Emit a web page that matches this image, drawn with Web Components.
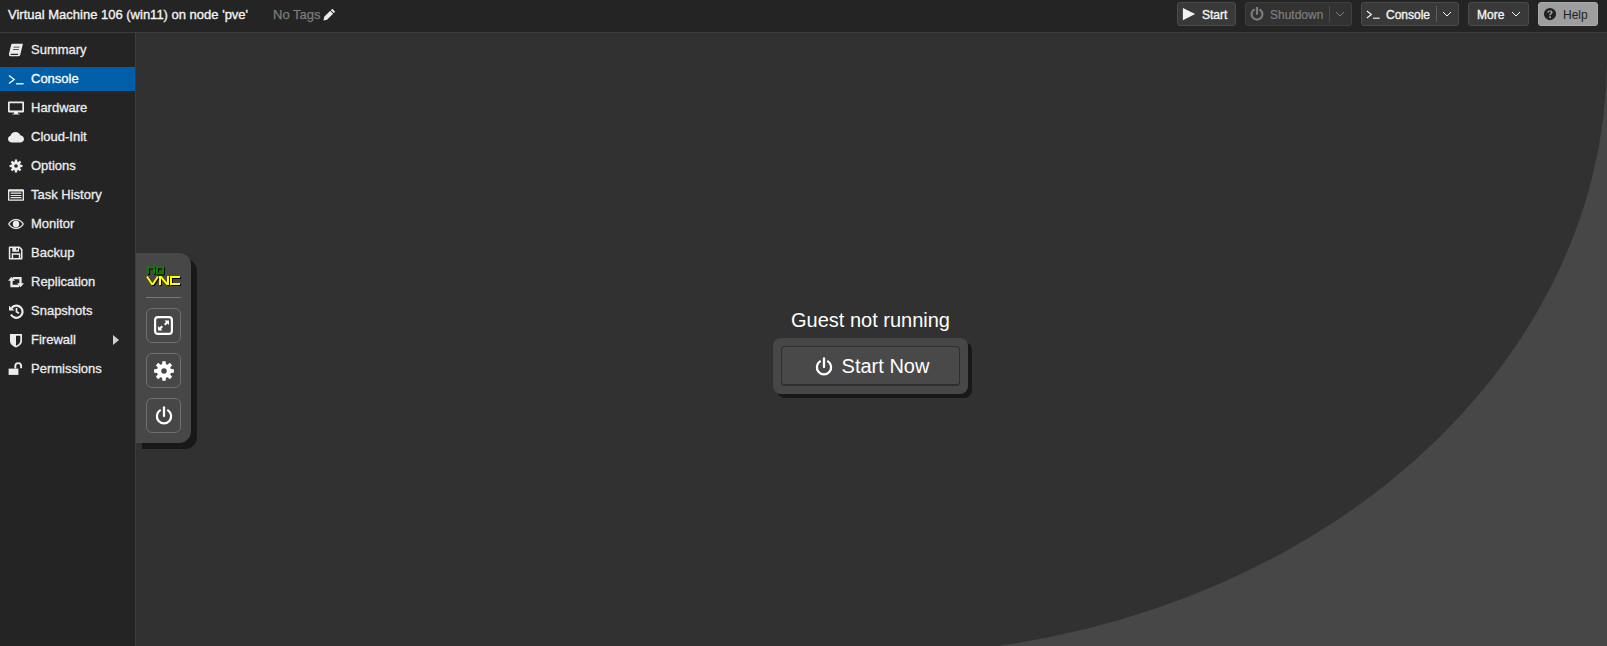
<!DOCTYPE html>
<html><head><meta charset="utf-8"><style>
html,body{margin:0;height:100%;background:#313131;overflow:hidden;font-family:"Liberation Sans",Arial,sans-serif}
body{display:flex;flex-direction:column;height:646px}
</style></head><body>
<pve-toolbar></pve-toolbar>
<div style="display:flex;flex:1;min-height:0">
<pve-nav></pve-nav>
<pve-console></pve-console>
</div>
<script>
function gearPath(){
 let d='',n=8,ro=8,ri=5.7;
 for(let k=0;k<n;k++){
  const a=k*Math.PI*2/n,w=.17,v=.27;
  const p=(r,t)=>(8+r*Math.cos(t)).toFixed(2)+' '+(8+r*Math.sin(t)).toFixed(2);
  d+=(k?'L':'M')+p(ri,a-v)+'L'+p(ro,a-w)+'L'+p(ro,a+w)+'L'+p(ri,a+v);
 }
 return d+'zM8 5.800a2.200 2.200 0 1 0 0 4.400a2.200 2.200 0 0 0 0-4.400z';
}
const G=gearPath();
const I={
book:'<path d="M4.200 1.800h10.800l-.4 1.300L12.300 12.800c-.2.800-.9 1.400-1.800 1.400H2.700C1.300 14.200.6 13 1 11.700L3.200 2.800C3.300 2.200 3.700 1.800 4.200 1.800zM5.600 4.700l-.2.800h6l.2-.8zM5 7l-.2.800h6l.2-.8zM2.800 13h7.100l.3-1.300H3c-.6 0-.7 1.300-.2 1.300z" fill-rule="evenodd"/>',
term:'<path d="M1 4.500l5.200 4L1 12.500" fill="none" stroke="currentColor" stroke-width="1.300"/><path d="M8 12.800h7.600" stroke="currentColor" stroke-width="1.300"/>',
desk:'<path d="M.8 1.600h14.400c.5 0 .8.300.8.800v9.200c0 .5-.3.800-.8.800H10v1.300h1.500v.9h-7v-.9H6v-1.300H.8c-.5 0-.8-.3-.8-.8V2.400c0-.5.300-.8.800-.8zM1.700 3.200v7.300h12.600V3.200z" fill-rule="evenodd"/>',
cloud:'<path d="M4 13.500C1.800 13.500 0 12 0 10c0-1.600 1-2.800 2.500-3.300C3 4.400 5 3 7.500 3c2.400 0 4.200 1.300 4.900 3.200C14.500 6.600 16 8.100 16 10c0 2-1.700 3.500-3.800 3.500z"/>',
cog:'<path d="'+G+'" fill-rule="evenodd"/>',
cogs:'<g transform="translate(8 8) scale(.82) translate(-8 -8)"><path d="'+G+'" fill-rule="evenodd"/></g>',
list:'<path d="M.8 2.300h14.400c.4 0 .8.400.8.800v9.800c0 .4-.4.800-.8.800H.8c-.4 0-.8-.4-.8-.8V3.100c0-.4.400-.8.800-.8zM1.300 4.500v7.900h13.400V4.500zM2.600 5.600h10.800v1.100H2.600zM2.600 7.900h10.800V9H2.600zM2.600 10.100h10.800v1.100H2.600z" fill-rule="evenodd"/>',
eye:'<path d="M8 3c3.500 0 6.400 2.100 8 5-1.600 2.900-4.500 5-8 5S1.600 10.900 0 8c1.600-2.900 4.500-5 8-5zM8 4.300C5.200 4.300 2.900 5.800 1.400 8c1.500 2.200 3.800 3.700 6.600 3.700s5.100-1.500 6.600-3.700C13.100 5.800 10.800 4.300 8 4.300zM8 4.800a3.200 3.200 0 1 1 0 6.400 3.200 3.200 0 0 1 0-6.400z" fill-rule="evenodd"/>',
save:'<path d="M1.800 1.500h9.900l2.800 2.800v9.200c0 .6-.4 1-1 1H1.800c-.6 0-1-.4-1-1v-11c0-.6.400-1 1-1zM2.300 3v10h1.400V8.300h8.600V13h.7V5l-2-2v3.700H4.300V3zM5.200 13h5.600V9.800H5.200zM8.300 3v2.300h1.500V3z" fill-rule="evenodd"/>',
retweet:'<path d="M3.500 6v6H11M5 4.200h7.500v5.800" fill="none" stroke="currentColor" stroke-width="2.300"/><path d="M0 6.800L3.500 2.800 7 6.800zM9 9.300h7l-3.500 4z"/>',
history:'<path d="M3.600 5A6.100 6.100 0 1 1 3 11.500" fill="none" stroke="currentColor" stroke-width="2.200"/><path d="M1 2.800L6.500 7.500H1z"/><path d="M8.500 5v3.700l2.500 1.600" fill="none" stroke="currentColor" stroke-width="1.700"/>',
shield:'<path d="M2 2h12v7c0 3.300-3.200 5.300-6 6.500C5.200 14.300 2 12.300 2 9zM8 3.700v10.100c1.800-.9 4.300-2.500 4.300-4.800V3.700z" fill-rule="evenodd"/>',
unlock:'<path d="M.6 7.600h9.800v6.300H.6z"/><path d="M7.300 7.600V5a2.900 2.900 0 0 1 5.800 0v2.300" fill="none" stroke="currentColor" stroke-width="1.900"/>',
play:'<path d="M1 1l14 7-14 7z"/>',
power:'<path d="M8 1v7" fill="none" stroke="currentColor" stroke-width="1.800" stroke-linecap="round"/><path d="M4.800 3.500a5.700 5.700 0 1 0 6.400 0" fill="none" stroke="currentColor" stroke-width="1.800" stroke-linecap="round"/>',
powerb:'<path d="M8 .8v7" fill="none" stroke="currentColor" stroke-width="2.500" stroke-linecap="round"/><path d="M4.300 3.300a6.200 6.200 0 1 0 7.400 0" fill="none" stroke="currentColor" stroke-width="2.500" stroke-linecap="round"/>',
help:'<path d="M8 1a7 7 0 1 1 0 14A7 7 0 0 1 8 1zM7 10.700v1.800h2v-1.800zM8 3.600c-1.800 0-3 1-3.100 2.600h1.800c.1-.7.500-1 1.200-1 .7 0 1.100.3 1.100.9 0 .5-.3.800-.9 1.200-.8.500-1.100 1-1.100 1.800v.3h1.900v-.2c0-.4.200-.6.700-1 .9-.6 1.300-1.200 1.300-2.200 0-1.500-1.200-2.400-3-2.400z" fill-rule="evenodd"/>',
pencil:'<path d="M11.500 1l3.500 3.500-1.800 1.800-3.500-3.500zM8.900 3.500l3.500 3.500-7.400 7.400-4.500 1 1-4.500z"/>',
chev:'<path d="M1 3l4 4 4-4" fill="none" stroke="currentColor" stroke-width="1"/>'
};
const svg=(n,s=16)=>`<svg width="${s}" height="${s}" viewBox="0 0 16 16" fill="currentColor" aria-hidden="true">${I[n]}</svg>`;
const chev='<svg width="10" height="10" viewBox="0 0 10 10" aria-hidden="true">'+I.chev+'</svg>';

class PveBtn extends HTMLElement{
 connectedCallback(){
  const s=this.attachShadow({mode:'open'});
  const ic=this.getAttribute('icon'),sp=this.hasAttribute('split'),m=this.hasAttribute('menu');
  s.innerHTML=`<style>
  :host{display:inline-flex;align-items:center;box-sizing:border-box;height:24px;border:1px solid #4b4b4b;border-radius:3px;background:#393939;color:#f4f4f4;font:12px "Liberation Sans",Arial,sans-serif;-webkit-text-stroke:.35px currentColor;padding:0 0 0 4px;white-space:nowrap;flex:none}
  :host([menu]){padding:0 0 0 8px}
  :host([disabled]){color:#7d7d7d;background:#323232;border-color:#404040;-webkit-text-stroke:.2px currentColor}
  :host([light]){background:#9e9e9e;border-color:#aaa;color:#222;-webkit-text-stroke:0}
  svg{display:block;flex:none}
  .i{margin-right:6px}
  .t{position:relative;top:1px}
  .sep{width:1px;height:16px;background:#5e5e5e;margin:0 5px 0 6px}
  :host([disabled]) .sep{background:#4a4a4a}
  :host([menu]) svg{margin-left:7px}
  </style>${ic?`<span class="i">${svg(ic,14)}</span>`:''}<span class="t"><slot></slot></span>${sp?'<span class="sep"></span>':''}${sp||m?chev:''}`;
 }
}
customElements.define('pve-btn',PveBtn);

class PveToolbar extends HTMLElement{
 connectedCallback(){
  const s=this.attachShadow({mode:'open'});
  s.innerHTML=`<style>
  :host{display:flex;align-items:center;box-sizing:border-box;height:33px;background:#242424;border-bottom:1px solid #3c3c3c;color:#f2f2f2;font:13px "Liberation Sans",Arial,sans-serif;padding:0 9px 4px 8px;flex:none}
  b{font-weight:normal;-webkit-text-stroke:.35px currentColor}
  .tags{margin-left:25px;color:#7c7c7c;display:flex;align-items:center;gap:2px;-webkit-text-stroke:.25px currentColor}
  .tags svg{color:#ececec;display:block}
  .sp{flex:1}
  .g{display:flex;gap:9px;align-items:center}
  </style><b>Virtual Machine 106 (win11) on node 'pve'</b>
  <span class="tags">No Tags${svg('pencil',13)}</span><span class="sp"></span>
  <div class="g"><pve-btn icon="play" style="width:59px">Start</pve-btn><pve-btn icon="powerb" disabled split style="width:107px">Shutdown</pve-btn><pve-btn icon="term" split style="width:98px">Console</pve-btn><pve-btn menu style="width:61px">More</pve-btn><pve-btn icon="help" light style="width:60px">Help</pve-btn></div>`;
 }
}
customElements.define('pve-toolbar',PveToolbar);

class PveNav extends HTMLElement{
 connectedCallback(){
  const s=this.attachShadow({mode:'open'});
  const items=[['book','Summary'],['term','Console',1],['desk','Hardware'],['cloud','Cloud-Init'],['cogs','Options'],['list','Task History'],['eye','Monitor'],['save','Backup'],['retweet','Replication'],['history','Snapshots'],['shield','Firewall',0,1],['unlock','Permissions']];
  s.innerHTML=`<style>
  :host{display:flex;flex-direction:column;gap:5px;box-sizing:border-box;width:136px;flex:none;background:#242424;border-right:1px solid #3c3c3c;padding:5px 0;color:#ececec;font:13px "Liberation Sans",Arial,sans-serif;-webkit-text-stroke:.3px currentColor}
  .r{display:flex;align-items:center;height:24px;padding-left:8px;position:relative}
  .r span{position:relative;top:-1px}
  .r.a{background:#005fa8;color:#fff}
  svg{display:block;flex:none;margin-right:7px}
  .ar{position:absolute;left:113px;top:7px;width:0;height:0;border-left:6px solid #d0d0d0;border-top:5px solid transparent;border-bottom:5px solid transparent}
  </style>`+items.map(([i,t,a,m])=>`<div class="r${a?' a':''}">${svg(i,16)}<span>${t}</span>${m?'<i class="ar"></i>':''}</div>`).join('');
 }
}
customElements.define('pve-nav',PveNav);

class VncBtn extends HTMLElement{
 connectedCallback(){
  const s=this.attachShadow({mode:'open'});
  s.innerHTML=`<style>:host{display:flex;box-sizing:border-box;width:35px;height:35px;border:1px solid #6e6e6e;border-radius:6px;align-items:center;justify-content:center;color:#fff}</style><slot></slot>`;
 }
}
customElements.define('vnc-btn',VncBtn);

class PveConsole extends HTMLElement{
 connectedCallback(){
  const s=this.attachShadow({mode:'open'});
  s.innerHTML=`<style>
  :host{display:flex;flex:1;min-width:0;position:relative;background:#474747;overflow:hidden;align-items:center;justify-content:center;color:#fff}
  .bg{position:absolute;left:0;top:0}
  .ctl{position:absolute;left:0;top:220px;box-sizing:border-box;width:55px;height:190px;background:#474747;border-radius:0 12px 12px 0;box-shadow:6px 6px 0 rgba(0,0,0,.5);padding:12px 10px 0;display:flex;flex-direction:column;align-items:center}
  .logo{width:35px;height:21px;display:block;margin-bottom:11px;flex:none}
  hr{width:35px;border:0;border-top:1px solid #777;margin:0 0 10px;flex:none}
  vnc-btn{margin-bottom:10px}
  .c{position:relative;display:flex;flex-direction:column;align-items:center;font-family:"Liberation Sans",Arial,sans-serif;margin:24px 2px 0 0}
  .m{font-size:20px;line-height:23px;margin-bottom:6px}
  .p{box-sizing:border-box;width:195px;height:56px;background:#474747;border-radius:8px;padding:8px;box-shadow:4px 4px 0 rgba(0,0,0,.5);display:flex}
  .b{flex:1;box-sizing:border-box;border:1px solid #2e2e2e;border-bottom-width:2px;border-radius:4px;background:#494949;display:flex;align-items:center;justify-content:center;gap:8px;font-size:20px;padding:2px 0 0 2px}
  svg{display:block}
  </style>
  <svg class="bg" width="1471" height="613" viewBox="0 0 1471 613" aria-hidden="true"><path d="M0 0H1471V25A736 597 0 0 1 735 622H0z" fill="#313131"/></svg>
  <div class="ctl">
   <svg class="logo" viewBox="0 0 35 21" aria-hidden="true"><g fill="none" stroke-width="2">
    <path d="M2 9V2.500h6V9M11 2.500h6v6h-6z" stroke="#000" transform="translate(1 1)"/>
    <path d="M2 9V2.500h6V9M11 2.500h6v6h-6z" stroke="#0a8000"/>
    <path d="M1 11.500L6 19h1l5-7.500M14 20v-8h1l6 7h1v-8M34 12h-9v7h9" stroke="#000" transform="translate(1 1)"/>
    <path d="M1 11.500L6 19h1l5-7.500M14 20v-8h1l6 7h1v-8M34 12h-9v7h9" stroke="#ff0"/></g></svg>
   <hr>
   <vnc-btn><svg width="19" height="19" viewBox="0 0 19 19" aria-hidden="true"><rect x="1.100" y="1.100" width="16.800" height="16.800" rx="3" fill="none" stroke="#fff" stroke-width="2.200"/><path d="M10.500 4.500H15V9l-1.500-1.500-2 2-1.500-1.500 2-2zM8.500 14.500H4V10l1.500 1.500 2-2 1.500 1.500-2 2z" fill="#fff"/></svg></vnc-btn>
   <vnc-btn>${svg('cog',20)}</vnc-btn>
   <vnc-btn>${svg('power',20)}</vnc-btn>
  </div>
  <div class="c"><div class="m">Guest not running</div><div class="p"><div class="b">${svg('power',20)}<span>Start Now</span></div></div></div>`;
 }
}
customElements.define('pve-console',PveConsole);
</script>
</body></html>
